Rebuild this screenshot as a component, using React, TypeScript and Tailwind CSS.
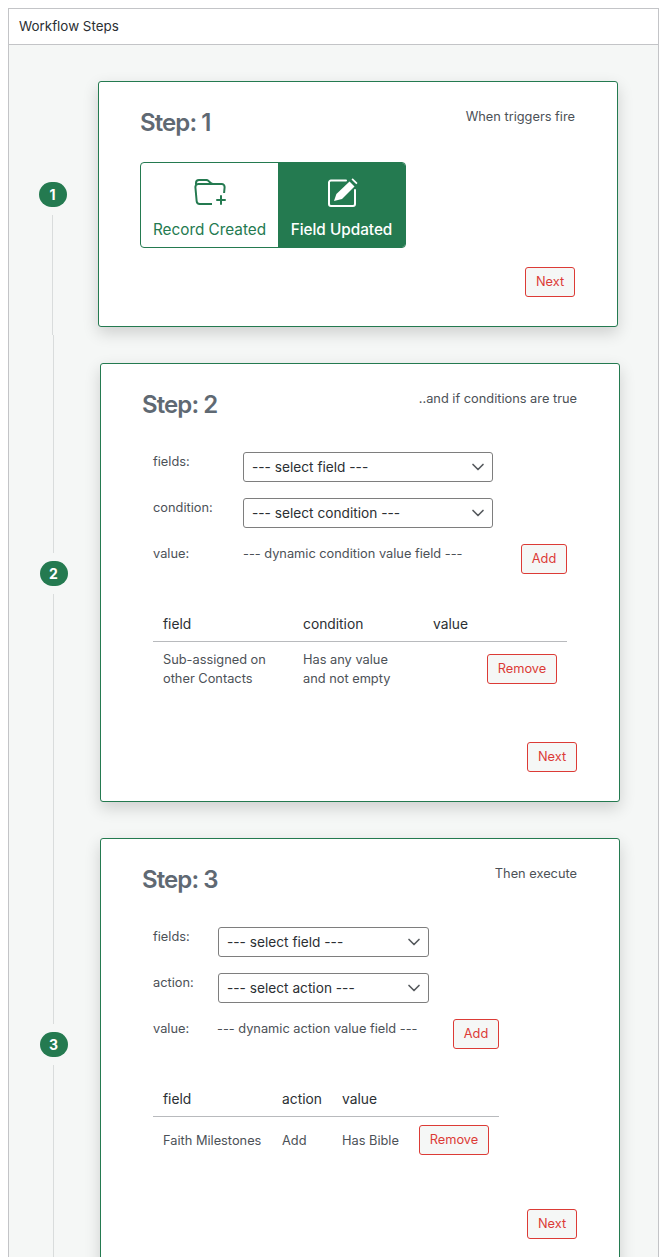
import { BsFolderPlus } from 'react-icons/bs';
import { ChevronDown } from 'lucide-react';

const OutlineButton = ({ label, className = '' }: { label: string; className?: string }) => (
  <button className={`h-[30px] rounded-[3px] border border-[#dc3b36] bg-[#f5f7f6] text-[12.8px] text-[#dc3b36] ${className}`}>
    {label}
  </button>
);

const FakeSelect = ({ label, className = '' }: { label: string; className?: string }) => (
  <div className={`flex h-[30px] items-center justify-between rounded-[3px] border border-[#7e7e7e] bg-white pl-2 pr-[4px] text-[13.7px] text-[#2b2f33] ${className}`}>
    <span>{label}</span>
    <ChevronDown size={20} strokeWidth={2} className="text-[#55595d]" />
  </div>
);

const StepLine = ({ className = '' }: { className?: string }) => (
  <div className={`w-px bg-[#d9dcdc] ${className}`} />
);

const Badge = ({ n }: { n: number }) => (
  <div className="flex h-[25px] w-[28px] items-center justify-center rounded-full bg-[#247a50] text-[14px] font-bold text-white">
    {n}
  </div>
);

const CardHead = ({ step, hint }: { step: number; hint: string }) => (
  <div className="flex items-start justify-between">
    <h2 className="mt-px -mb-px text-[24px] leading-[32px] font-semibold tracking-[-0.9px] text-[#5f6973]">Step: {step}</h2>
    <span className="mt-px text-[12.8px] leading-[20px] text-[#4c5157]">{hint}</span>
  </div>
);

const Label = ({ text, className = '' }: { text: string; className?: string }) => (
  <span className={`mt-px text-[12.8px] leading-[18px] text-[#4c5157] ${className}`}>{text}</span>
);

const EditIcon = () => (
  <svg width="30" height="29" viewBox="0 0 30 29" fill="none" className="ml-[3px]">
    <path d="M18 2.5H3a2 2 0 0 0-2 2V26a2 2 0 0 0 2 2h22a2 2 0 0 0 2-2V12" stroke="currentColor" strokeWidth="2" strokeLinecap="round" />
    <path d="M6 23l2.4-7L21.5 3.5l5 5L14 21z" fill="currentColor" />
    <path d="M23.5 1.5l1.2-1.2 4.8 4.8-1.2 1.2z" fill="currentColor" />
  </svg>
);

export default function App() {
  return (
    <div className="h-[1257px] overflow-hidden bg-white pt-2 pl-2 pr-[7px] font-['Inter',sans-serif]">
      <div className="h-[1300px] border border-[#c3c4c7] bg-[#f5f7f6]">
        <div className="flex h-[36px] items-center border-b border-[#c3c4c7] bg-white pl-[10px] text-[13.4px] text-[#2b2f33]">
          Workflow Steps
        </div>

        {/* step 1 */}
        <div className="flex pt-[36px]">
          <div className="flex h-[254px] w-[87px] flex-col items-center pt-[101px]">
            <Badge n={1} />
            <div className="h-2" />
            <StepLine className="h-[120px]" />
          </div>
          <div className="ml-[2px] h-[246px] w-[520px] rounded-[3px] border border-[#247a50] bg-white pt-6 pr-[42px] pl-[41px] shadow-[0_6px_16px_rgba(0,0,0,0.16)]">
            <CardHead step={1} hint="When triggers fire" />
            <div className="mt-[24px] flex h-[86px] w-[266px] overflow-hidden rounded-[4px] border border-[#247a50] text-[15.3px]">
              <div className="flex w-[137px] flex-col items-center pt-[14px] text-[#247a50]">
                <BsFolderPlus size={32} />
                <span className="mt-[10px]">Record Created</span>
              </div>
              <div className="flex flex-1 flex-col items-center bg-[#247a50] pt-[15px] font-medium text-white">
                <EditIcon />
                <span className="mt-[12px]">Field Updated</span>
              </div>
            </div>
            <div className="mt-[19px] flex justify-end">
              <OutlineButton label="Next" className="w-[50px]" />
            </div>
          </div>
        </div>

        {/* step 2 */}
        <div className="flex">
          <div className="flex h-[484px] w-[89px] flex-col items-center">
            <StepLine className="h-[218px]" />
            <div className="h-2" />
            <Badge n={2} />
            <div className="h-2" />
            <StepLine className="flex-1" />
          </div>
          <div className="mt-[28px] ml-[2px] h-[439px] w-[520px] rounded-[3px] border border-[#247a50] bg-white pt-6 pr-[42px] pl-[41px] shadow-[0_6px_16px_rgba(0,0,0,0.16)]">
            <CardHead step={2} hint="..and if conditions are true" />
            <div className="mt-[32px] flex flex-col gap-4 pl-[11px]">
              <div className="flex items-start">
                <Label text="fields:" className="w-[90px]" />
                <FakeSelect label="--- select field ---" className="w-[250px]" />
              </div>
              <div className="flex items-start">
                <Label text="condition:" className="w-[90px]" />
                <FakeSelect label="--- select condition ---" className="w-[250px]" />
              </div>
              <div className="flex items-start">
                <Label text="value:" className="w-[90px]" />
                <Label text="--- dynamic condition value field ---" className="w-[278px]" />
                <OutlineButton label="Add" className="w-[46px]" />
              </div>
            </div>
            <table className="mt-[34px] ml-[11px] w-[414px] table-fixed text-left text-[12.8px] text-[#4c5157]">
              <thead>
                <tr className="border-b border-[#b8babd] text-[13.8px] text-[#2b2f33]">
                  <th className="h-[33px] w-[150px] pl-[10px] font-normal">field</th>
                  <th className="w-[130px] font-normal">condition</th>
                  <th className="font-normal">value</th>
                </tr>
              </thead>
              <tbody>
                <tr>
                  <td className="pt-[8px] pl-[10px] align-top leading-[19px]">Sub-assigned on<br />other Contacts</td>
                  <td className="pt-[8px] align-top leading-[19px]">Has any value<br />and not empty</td>
                  <td className="pt-[12px] pr-[10px] text-right align-top">
                    <OutlineButton label="Remove" className="w-[70px]" />
                  </td>
                </tr>
              </tbody>
            </table>
            <div className="mt-[54px] flex justify-end">
              <OutlineButton label="Next" className="w-[50px]" />
            </div>
          </div>
        </div>

        {/* step 3 */}
        <div className="flex">
          <div className="flex h-[450px] w-[89px] flex-col items-center">
            <StepLine className="h-[205px]" />
            <div className="h-2" />
            <Badge n={3} />
            <div className="h-2" />
            <StepLine className="flex-1" />
          </div>
          <div className="mt-[19px] ml-[2px] h-[439px] w-[520px] rounded-[3px] border border-[#247a50] bg-white pt-6 pr-[42px] pl-[41px] shadow-[0_6px_16px_rgba(0,0,0,0.16)]">
            <CardHead step={3} hint="Then execute" />
            <div className="mt-[32px] flex flex-col gap-4 pl-[11px]">
              <div className="flex items-start">
                <Label text="fields:" className="w-[65px]" />
                <FakeSelect label="--- select field ---" className="w-[211px]" />
              </div>
              <div className="flex items-start">
                <Label text="action:" className="w-[65px]" />
                <FakeSelect label="--- select action ---" className="w-[211px]" />
              </div>
              <div className="flex items-start">
                <Label text="value:" className="w-[64px]" />
                <Label text="--- dynamic action value field ---" className="w-[236px]" />
                <OutlineButton label="Add" className="w-[46px]" />
              </div>
            </div>
            <table className="mt-[34px] ml-[11px] w-[346px] table-fixed text-left text-[12.8px] text-[#4c5157]">
              <thead>
                <tr className="border-b border-[#b8babd] text-[13.8px] text-[#2b2f33]">
                  <th className="h-[33px] w-[129px] pl-[10px] font-normal">field</th>
                  <th className="w-[60px] font-normal">action</th>
                  <th className="font-normal">value</th>
                </tr>
              </thead>
              <tbody>
                <tr>
                  <td className="pt-[14px] pl-[10px] align-top leading-[19px]">Faith Milestones</td>
                  <td className="pt-[14px] align-top leading-[19px]">Add</td>
                  <td className="pt-[8px] pr-[10px] align-top">
                    <div className="flex items-start justify-between">
                      <span className="mt-[6px]">Has Bible</span>
                      <OutlineButton label="Remove" className="w-[70px]" />
                    </div>
                  </td>
                </tr>
              </tbody>
            </table>
            <div className="mt-[54px] flex justify-end">
              <OutlineButton label="Next" className="w-[50px]" />
            </div>
          </div>
        </div>
      </div>
    </div>
  );
}
